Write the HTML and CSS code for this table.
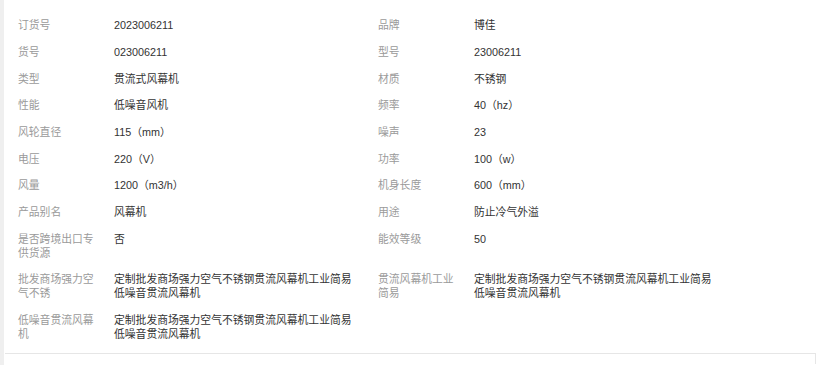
FILE: index.html
```html
<!DOCTYPE html>
<html lang="zh-CN">
<head>
<meta charset="utf-8">
<title>产品参数</title>
<link rel="stylesheet" href="styles.css">
</head>
<body>
<div class="page">
  <div class="rail"></div>
  <div class="content">
    <div class="specs">
      <div class="item"><span class="label">订货号</span><span class="value">2023006211</span></div>
      <div class="item"><span class="label">品牌</span><span class="value">博佳</span></div>
      <div class="item"><span class="label">货号</span><span class="value">023006211</span></div>
      <div class="item"><span class="label">型号</span><span class="value">23006211</span></div>
      <div class="item"><span class="label">类型</span><span class="value">贯流式风幕机</span></div>
      <div class="item"><span class="label">材质</span><span class="value">不锈钢</span></div>
      <div class="item"><span class="label">性能</span><span class="value">低噪音风机</span></div>
      <div class="item"><span class="label">频率</span><span class="value">40（hz）</span></div>
      <div class="item"><span class="label">风轮直径</span><span class="value">115（mm）</span></div>
      <div class="item"><span class="label">噪声</span><span class="value">23</span></div>
      <div class="item"><span class="label">电压</span><span class="value">220（V）</span></div>
      <div class="item"><span class="label">功率</span><span class="value">100（w）</span></div>
      <div class="item"><span class="label">风量</span><span class="value">1200（m3/h）</span></div>
      <div class="item"><span class="label">机身长度</span><span class="value">600（mm）</span></div>
      <div class="item"><span class="label">产品别名</span><span class="value">风幕机</span></div>
      <div class="item"><span class="label">用途</span><span class="value">防止冷气外溢</span></div>
      <div class="item"><span class="label">是否跨境出口专供货源</span><span class="value">否</span></div>
      <div class="item"><span class="label">能效等级</span><span class="value">50</span></div>
      <div class="item"><span class="label">批发商场强力空气不锈</span><span class="value">定制批发商场强力空气不锈钢贯流风幕机工业简易低噪音贯流风幕机</span></div>
      <div class="item"><span class="label">贯流风幕机工业简易</span><span class="value">定制批发商场强力空气不锈钢贯流风幕机工业简易低噪音贯流风幕机</span></div>
      <div class="item"><span class="label">低噪音贯流风幕机</span><span class="value">定制批发商场强力空气不锈钢贯流风幕机工业简易低噪音贯流风幕机</span></div>
    </div>
    <div class="next-box"></div>
  </div>
</div>
</body>
</html>
```

FILE: styles.css
```css
html, body {
  margin: 0;
  padding: 0;
  background: #ffffff;
}

body {
  font-family: "Liberation Sans", "Noto Sans CJK SC", sans-serif;
  font-size: 10.8px;
  color: #333333;
}

.page {
  display: flex;
  height: 365px;
  overflow: hidden;
}

.rail {
  width: 4px;
  flex: none;
  background: #efefef;
}

.content {
  width: 811px;
  margin-left: 1px;
  display: flex;
  flex-direction: column;
}

.specs {
  display: grid;
  grid-template-columns: 360px 360px;
  padding: 12px 0 0 13px;
}

.item {
  display: grid;
  grid-template-columns: 80px 244px;
  column-gap: 16px;
  padding: 6.4px 0 6.27px;
  line-height: 14px;
}

.label {
  color: #9a9a9a;
}

.value {
  color: #333333;
}

.next-box {
  margin-top: 6px;
  height: 10px;
  border-top: 1px solid #e6e6e6;
  border-right: 1px solid #e6e6e6;
}
```
